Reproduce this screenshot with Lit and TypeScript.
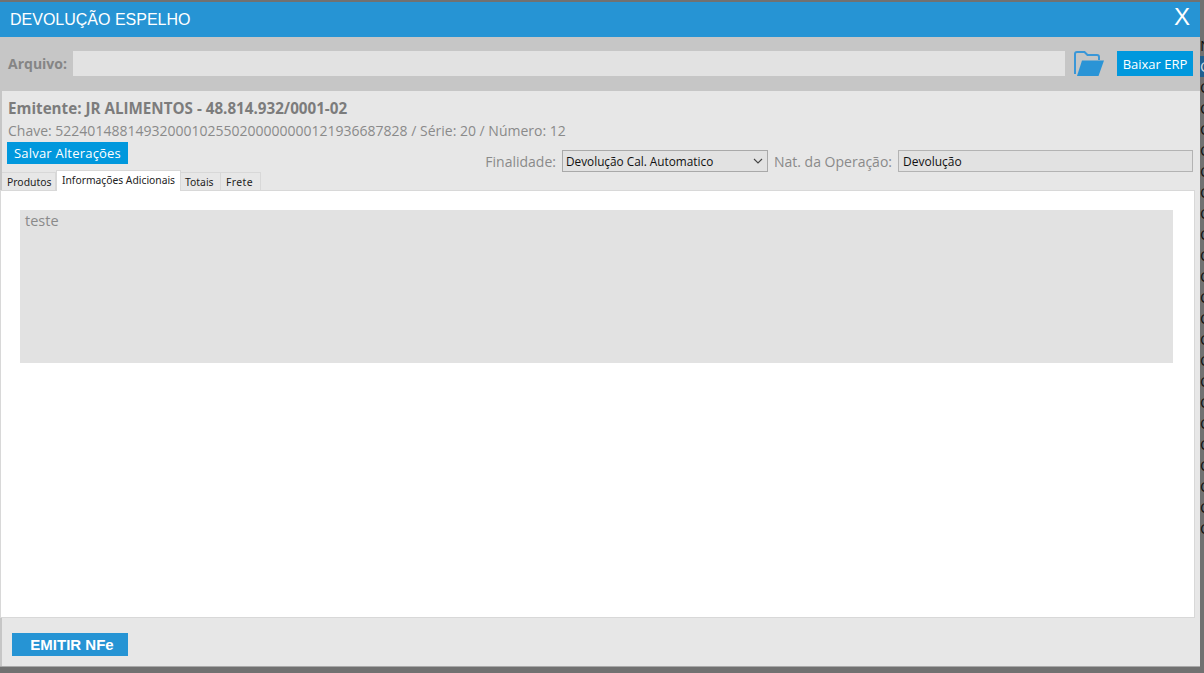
import { LitElement, html, css } from "lit";
import { customElement } from "lit/decorators.js";

@customElement("app-root")
export class AppRoot extends LitElement {
  static styles = css`
    :host { display: block; width: 1204px; height: 673px; position: relative; overflow: hidden; background: #717171; font-family: "Open Sans", sans-serif; }
    .backdrop { height: 100%; display: flex; justify-content: flex-end; }
    .list { width: 4px; overflow: hidden; padding-top: 35px; font: 15px/21px "Open Sans", sans-serif; color: #101010; white-space: nowrap; }
    .list div { height: 21px; }
    .list .sel { background: #1f5f8f; color: #cfd8e0; }
    .modal { position: absolute; left: 0; top: 2px; width: 1200px; height: 665px; display: flex; flex-direction: column; box-sizing: border-box; background: #e7e7e7; border-bottom: 1px solid #a9a9a9; }
    .title { height: 35px; flex: none; background: #2694d4; color: #fff; display: flex; align-items: center; justify-content: space-between; padding: 0 10px; font: 16px "Liberation Sans", sans-serif; }
    .close { font-size: 24px; line-height: 30px; margin-top: -5px; }
    .upload { height: 54px; flex: none; box-sizing: border-box; background: #c6c6c6; display: flex; align-items: center; padding: 0 7px 1px 8px; }
    .upload label { font-size: 14px; font-weight: 700; color: #858585; width: 65px; flex: none; }
    .file { flex: 1; height: 25px; background: #e2e2e2; }
    .folder { width: 30px; height: 25px; margin: 0 13px 0 9px; flex: none; }
    .btn { background: #0098dd; color: #fff; display: flex; align-items: center; justify-content: center; box-sizing: border-box; }
    .erp { width: 76px; height: 25px; flex: none; font-size: 13px; }
    .body { flex: 1; display: flex; flex-direction: column; padding: 0 5px 0 0; min-height: 0; }
    .head { border-left: 2px solid #c6c6c6; margin-right: -5px; padding-right: 5px; }
    .emit { font-size: 15.2px; font-weight: 700; color: #7c7c7c; padding: 7px 0 0 6px; line-height: 20px; }
    .key { font-size: 14px; color: #8a8a8a; padding: 3px 0 0 6px; line-height: 20px; }
    .bar { display: flex; justify-content: space-between; align-items: flex-start; }
    .bar-left { display: flex; flex-direction: column; padding-top: 1px; }
    .save { width: 121px; height: 22px; margin-left: 5px; font-size: 13px; letter-spacing: 0.2px; }
    .tabs { display: flex; align-items: flex-start; height: 21px; margin-top: 6px; position: relative; z-index: 1; margin-bottom: -1px; font-family: "Noto Sans", sans-serif; font-size: 10.4px; color: #222; white-space: nowrap; }
    .tab { height: 18px; margin-top: 2px; box-sizing: border-box; width: 40px; padding: 0 0 0 5px; border: 1px solid #d8d8d8; border-bottom: 0; border-left: 0; display: flex; align-items: center; background: #e7e7e7; }
    .tab.first { width: 54px; }
    .tab.totais { padding-left: 4px; }
    .tab.frete { letter-spacing: 0.4px; }
    .tab.on { height: 21px; margin-top: 0; width: 125px; background: #fff; border-left: 1px solid #d8d8d8; padding-bottom: 3px; font-size: 10.3px; }
    .fields { display: flex; align-items: center; gap: 6px; padding: 9px 2px 0 0; font-size: 14px; color: #8a8a8a; }
    .select { width: 206px; height: 22px; box-sizing: border-box; border: 1px solid #a9a9a9; background: #e2e2e2; color: #111; font-size: 11.8px; display: flex; align-items: center; justify-content: space-between; padding: 0 4px 0 3px; }
    .nat { width: 295px; height: 22px; box-sizing: border-box; border: 1px solid #b3b3b3; background: #e2e2e2; color: #111; font-size: 12px; display: flex; align-items: center; padding: 0 4px; }
    .panel { flex: 1; background: #fff; border: 1px solid #d8d8d8; padding: 19px 21px 0 19px; min-height: 0; }
    .area { height: 153px; background: #e2e2e2; color: #8a8a8a; font-size: 14.5px; padding: 1px 5px; box-sizing: border-box; }
    .foot { height: 48px; flex: none; box-sizing: border-box; display: flex; align-items: flex-start; padding: 15px 0 0 10px; border-left: 2px solid #c6c6c6; }
    .emitir { width: 116px; height: 23px; box-sizing: border-box; padding-left: 4px; background: #2694d4; color: #fff; font: 700 15px "Liberation Sans", sans-serif; display: flex; align-items: center; justify-content: center; }
  `;

  render() {
    const rows = Array.from({ length: 23 }, (_, i) => i);
    return html`
      <div class="backdrop">
        <div class="list">
          <div>N</div>
          ${rows.map((i) => html`<div class=${i === 0 ? "sel" : ""}>O</div>`)}
        </div>
      </div>
      <div class="modal">
        <div class="title"><span>DEVOLUÇÃO ESPELHO</span><span class="close">X</span></div>
        <div class="upload">
          <label>Arquivo:</label>
          <div class="file"></div>
          <svg class="folder" viewBox="0 0 30 25">
            <path d="M1 23V3A2 2 0 0 1 3 1h7.500l3 3H23a2 2 0 0 1 2 2V9" fill="none" stroke="#3a97d8" stroke-width="2"/>
            <path d="M8 9.500H30L24.500 25H3Z" fill="#2a94d6"/>
          </svg>
          <div class="btn erp">Baixar ERP</div>
        </div>
        <div class="body">
          <div class="head">
            <div class="emit">Emitente: JR ALIMENTOS - 48.814.932/0001-02</div>
            <div class="key">Chave: 52240148814932000102550200000000121936687828 / Série: 20 / Número: 12</div>
            <div class="bar">
              <div class="bar-left">
                <div class="btn save">Salvar Alterações</div>
                <div class="tabs">
                  <div class="tab first">Produtos</div>
                  <div class="tab on">Informações Adicionais</div>
                  <div class="tab totais">Totais</div>
                  <div class="tab frete">Frete</div>
                </div>
              </div>
              <div class="fields">
                <span>Finalidade:</span>
                <div class="select">Devolução Cal. Automatico
                  <svg width="10" height="6" viewBox="0 0 10 6"><path d="M1 1l4 4 4-4" fill="none" stroke="#444" stroke-width="1.100"/></svg>
                </div>
                <span>Nat. da Operação:</span>
                <div class="nat">Devolução</div>
              </div>
            </div>
          </div>
          <div class="panel"><div class="area">teste</div></div>
        </div>
        <div class="foot"><div class="emitir">EMITIR NFe</div></div>
      </div>
    `;
  }
}
